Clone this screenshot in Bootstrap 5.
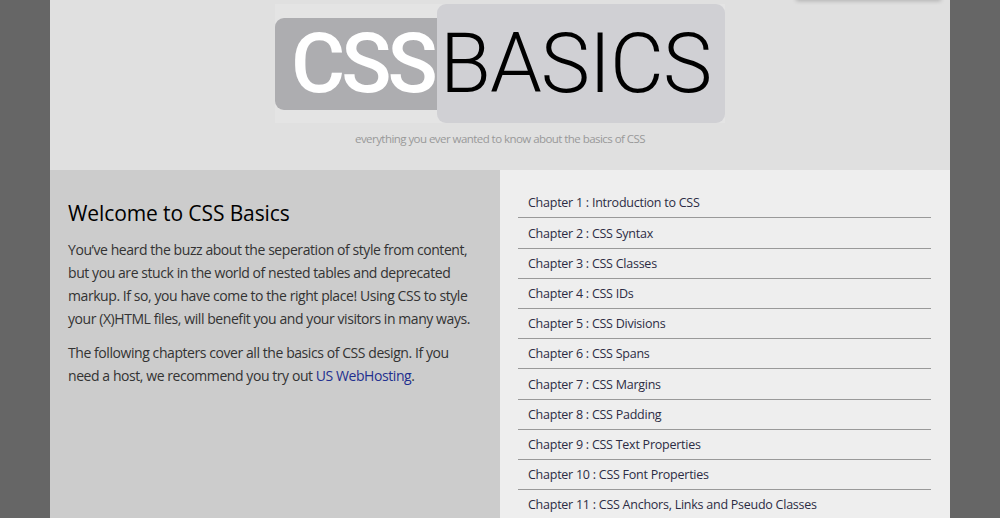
<!DOCTYPE html>
<html lang="en">
  <head>
    <meta charset="UTF-8" />
    <meta name="viewport" content="width=device-width, initial-scale=1.0" />
    <title>CSS Basics</title>

    <link
      href="https://cdn.jsdelivr.net/npm/bootstrap@5.3.0/dist/css/bootstrap.min.css"
      rel="stylesheet"
    />

    <style>
      html,
      body {
        height: 518px;
        overflow: hidden;
      }
      body {
        background: #666;
        font-family: "Open Sans", "Liberation Sans", sans-serif;
        font-size: 14px;
        letter-spacing: -0.43px;
        color: #333;
      }
      .page-wrap {
        width: 900px;
        margin: 0 auto;
      }
      .site-head {
        height: 170px;
        background: #e0e0e0;
        padding-top: 4px;
        position: relative;
      }
      .head-tab {
        position: absolute;
        top: -6px;
        right: 9px;
        width: 145px;
        height: 6px;
        background: #e0e0e0;
        box-shadow: 0 1px 4px rgba(0, 0, 0, 0.22);
      }
      .logo-box {
        width: 450px;
        height: 119px;
        background: #e4e4e4;
      }
      .logo-css {
        width: 170px;
        height: 92px;
        margin-right: -8px;
        padding-left: 16px;
        border-radius: 9px 0 0 9px;
        background: #adadb0;
        color: #fff;
        font-family: Roboto, sans-serif;
        font-size: 83px;
        font-weight: 500;
        line-height: 92px;
        letter-spacing: -4px;
      }
      .logo-basics {
        position: relative;
        width: 288px;
        height: 119px;
        padding-left: 3px;
        border-radius: 9px;
        background: #d0d0d4;
        color: #000;
        font-family: Roboto, sans-serif;
        font-size: 83px;
        font-weight: 300;
        line-height: 119px;
        letter-spacing: -1px;
      }
      .tagline {
        margin-top: 7px;
        font-size: 11.5px;
        letter-spacing: -0.55px;
        color: #999;
        text-align: center;
      }
      .col-welcome {
        width: 450px;
        height: 348px;
        padding: 30px 18px 0;
        background: #ccc;
      }
      .col-welcome h1 {
        margin-bottom: 12px;
        font-size: 21px;
        font-weight: 400;
        line-height: 26px;
        letter-spacing: -0.1px;
        color: #000;
      }
      .col-welcome p {
        margin-bottom: 11px;
        line-height: 23px;
      }
      .col-welcome a {
        color: #1f2f8f;
        text-decoration: none;
      }
      .col-chapters {
        width: 450px;
        height: 348px;
        padding: 18.2px 19px 0 18px;
        background: #eee;
      }
      .chapter-list a {
        display: block;
        height: 30.2px;
        padding: 6.2px 10px 0;
        border-bottom: 1px solid #999;
        font-size: 12.5px;
        line-height: 18px;
        letter-spacing: -0.25px;
        color: #2c2c44;
        text-decoration: none;
      }
    </style>
  </head>
  <body>
    <div class="page-wrap">
      <div class="site-head">
        <div class="head-tab"></div>
        <div class="logo-box d-flex align-items-center mx-auto">
          <div class="logo-css">CSS</div>
          <div class="logo-basics">BASICS</div>
        </div>
        <div class="tagline">everything you ever wanted to know about the basics of CSS</div>
      </div>

      <div class="d-flex">
        <div class="col-welcome">
          <h1>Welcome to CSS Basics</h1>
          <p>
            You’ve heard the buzz about the seperation of style from content,<br />
            but you are stuck in the world of nested tables and deprecated<br />
            markup. If so, you have come to the right place! Using CSS to style<br />
            your (X)HTML files, will benefit you and your visitors in many ways.
          </p>
          <p>
            The following chapters cover all the basics of CSS design. If you<br />
            need a host, we recommend you try out <a href="#">US WebHosting</a>.
          </p>
        </div>

        <div class="col-chapters">
          <div class="chapter-list">
            <a href="#">Chapter 1 : Introduction to CSS</a>
            <a href="#">Chapter 2 : CSS Syntax</a>
            <a href="#">Chapter 3 : CSS Classes</a>
            <a href="#">Chapter 4 : CSS IDs</a>
            <a href="#">Chapter 5 : CSS Divisions</a>
            <a href="#">Chapter 6 : CSS Spans</a>
            <a href="#">Chapter 7 : CSS Margins</a>
            <a href="#">Chapter 8 : CSS Padding</a>
            <a href="#">Chapter 9 : CSS Text Properties</a>
            <a href="#">Chapter 10 : CSS Font Properties</a>
            <a href="#">Chapter 11 : CSS Anchors, Links and Pseudo Classes</a>
          </div>
        </div>
      </div>
    </div>

    <script src="https://cdn.jsdelivr.net/npm/bootstrap@5.3.0/dist/js/bootstrap.bundle.min.js"></script>
  </body>
</html>
